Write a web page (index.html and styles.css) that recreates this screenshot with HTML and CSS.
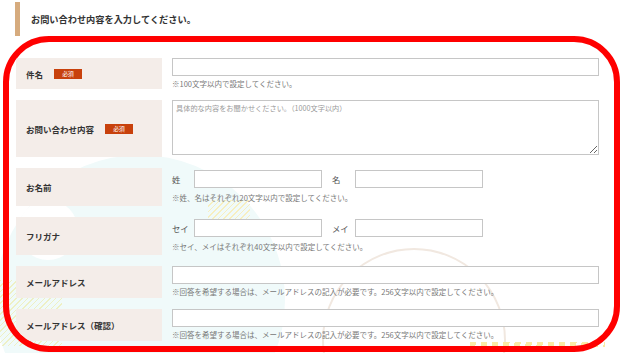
FILE: index.html
```html
<!DOCTYPE html>
<html lang="ja">
<head>
<meta charset="utf-8">
<title>お問い合わせ</title>
<link rel="stylesheet" href="styles.css">
</head>
<body>
<div class="decor">
  <div class="deco deco-cyan"></div>
  <div class="deco deco-white"></div>
  <div class="deco deco-ring"></div>
  <div class="deco deco-hatch-left"></div>
  <div class="deco deco-hatch-mid"></div>
  <div class="deco deco-dash"></div>
</div>

<h2 class="heading">お問い合わせ内容を入力してください。</h2>

<div class="frame">
  <div class="row">
    <div class="label">件名<span class="badge">必須</span></div>
    <div class="field">
      <input class="text" type="text">
      <p class="note">※100文字以内で設定してください。</p>
    </div>
  </div>

  <div class="row row-area">
    <div class="label">お問い合わせ内容<span class="badge">必須</span></div>
    <div class="field">
      <textarea class="area" placeholder="具体的な内容をお聞かせください。（1000文字以内）"></textarea>
    </div>
  </div>

  <div class="row row-name">
    <div class="label">お名前</div>
    <div class="field">
      <div class="name-group">
        <span class="name-label">姓</span><input class="text name-input" type="text">
        <span class="name-label second">名</span><input class="text name-input" type="text">
      </div>
      <p class="note note-name">※姓、名はそれぞれ20文字以内で設定してください。</p>
    </div>
  </div>

  <div class="row row-name">
    <div class="label">フリガナ</div>
    <div class="field">
      <div class="name-group">
        <span class="name-label">セイ</span><input class="text name-input" type="text">
        <span class="name-label second">メイ</span><input class="text name-input" type="text">
      </div>
      <p class="note note-name">※セイ、メイはそれぞれ40文字以内で設定してください。</p>
    </div>
  </div>

  <div class="row row-mail">
    <div class="label">メールアドレス</div>
    <div class="field">
      <input class="text" type="text">
      <p class="note">※回答を希望する場合は、メールアドレスの記入が必要です。256文字以内で設定してください。</p>
    </div>
  </div>

  <div class="row row-mail">
    <div class="label">メールアドレス（確認）</div>
    <div class="field">
      <input class="text" type="text">
      <p class="note">※回答を希望する場合は、メールアドレスの記入が必要です。256文字以内で設定してください。</p>
    </div>
  </div>
</div>
</body>
</html>
```

FILE: styles.css
```css
* { box-sizing: border-box; }

html, body {
  margin: 0;
  padding: 0;
}

body {
  width: 621px;
  height: 353px;
  overflow: hidden;
  position: relative;
  background: #ffffff;
  font-family: "Noto Sans CJK JP", "Noto Sans", sans-serif;
  color: #333333;
}

/* background decorations */
.decor {
  position: absolute;
  left: 0;
  top: 0;
  width: 621px;
  height: 353px;
  overflow: hidden;
  z-index: 0;
  pointer-events: none;
}
.deco {
  position: absolute;
}
.deco-cyan {
  left: -5px;
  top: 155px;
  width: 290px;
  height: 290px;
  border-radius: 50%;
  background: #f0fafa;
}
.deco-white {
  left: 18px;
  top: 200px;
  width: 60px;
  height: 60px;
  border-radius: 50%;
  background: #ffffff;
}
.deco-ring {
  left: 322px;
  top: 248px;
  width: 184px;
  height: 184px;
  border-radius: 50%;
  border: 2px solid #f1e8e0;
}
.deco-hatch-left {
  left: 0;
  top: 280px;
  width: 62px;
  height: 66px;
  background: repeating-linear-gradient(135deg, #eef0c4 0 1px, transparent 1px 4px);
}
.deco-hatch-mid {
  left: 208px;
  top: 200px;
  width: 42px;
  height: 20px;
  background: repeating-linear-gradient(135deg, #f7efc0 0 1px, transparent 1px 4px);
}
.deco-dash {
  left: 470px;
  top: 342px;
  width: 135px;
  height: 5px;
  background: repeating-linear-gradient(100deg, #fbeaa5 0 6px, transparent 6px 11px);
}

.heading {
  position: relative;
  z-index: 1;
  margin: 2px 0 0 15px;
  height: 34px;
  border-left: 5px solid #d6ab7e;
  padding-left: 11px;
  display: flex;
  align-items: center;
  font-size: 9.2px;
  font-weight: bold;
  color: #333333;
}

.frame {
  position: relative;
  z-index: 1;
  margin: 0 1px 0 3px;
  height: 316px;
  border: 6px solid #ff0000;
  border-radius: 46px;
  padding: 16px 15px 0 7px;
  overflow: hidden;
}

.row {
  display: grid;
  grid-template-columns: 146px 1fr;
  column-gap: 10px;
  margin-bottom: 11px;
}
.row:last-child { margin-bottom: 0; }

.label {
  background: #f4ede9;
  display: flex;
  align-items: center;
  padding-left: 10px;
  font-size: 8.5px;
  font-weight: bold;
  color: #333333;
}

.badge {
  display: inline-flex;
  align-items: center;
  justify-content: center;
  width: 28px;
  height: 10px;
  margin-left: 11px;
  background: #c8410c;
  color: #ffffff;
  font-size: 5.8px;
  font-weight: normal;
}

.field {
  display: flex;
  flex-direction: column;
}
.row-mail .field { padding-bottom: 1px; }

.text {
  display: block;
  width: 100%;
  height: 18px;
  margin: 0;
  border: 1px solid #c6c6c6;
  background: #ffffff;
  font-family: inherit;
}

.area {
  display: block;
  width: 100%;
  height: 55px;
  margin: 0 0 2px;
  border: 1px solid #c6c6c6;
  background: #ffffff;
  padding: 2px 3px;
  font-family: inherit;
  font-size: 7.2px;
  color: #333;
}
.area::placeholder { color: #9a9a9a; }

.note {
  margin: 2px 0 0;
  font-size: 7.5px;
  line-height: 11px;
  color: #777777;
}

.row-name .field { padding: 2px 0 3px; }
.note-name { margin-top: 4px; }

.name-group {
  display: flex;
  align-items: center;
}
.name-label {
  width: 22px;
  font-size: 8.4px;
  color: #555555;
}
.name-label.second {
  margin-left: 10px;
  width: 23px;
}
.name-input {
  width: 128px;
}
```
